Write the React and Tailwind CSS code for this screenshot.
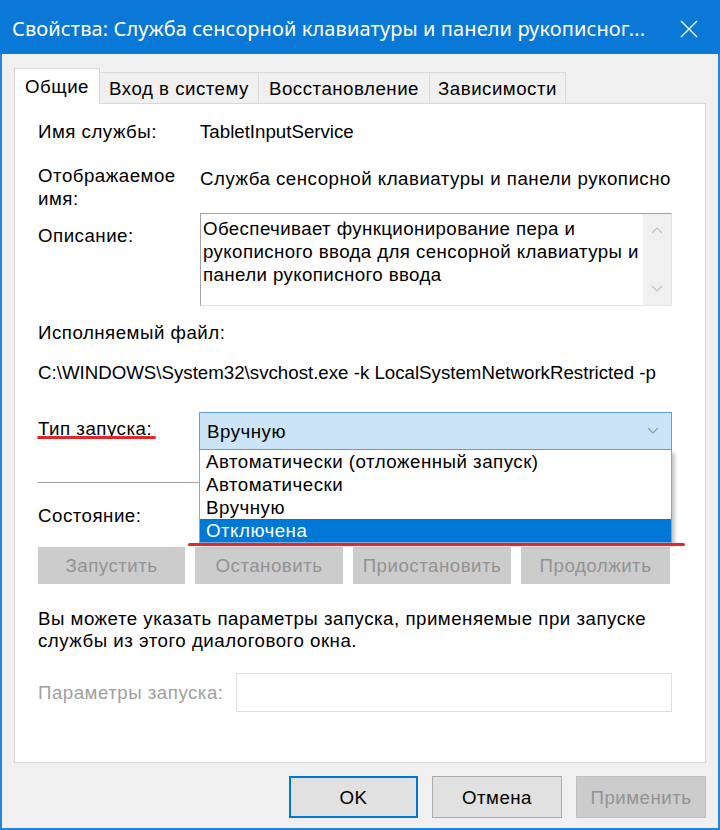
import React from "react";

function Chevron({ up = false, className = "" }) {
  return (
    <svg width="12" height="8" viewBox="0 0 12 8" className={className}>
      <path
        d={up ? "M1 7 L6 2 L11 7" : "M1 1 L6 6 L11 1"}
        fill="none"
        stroke="currentColor"
        strokeWidth="1.2"
      />
    </svg>
  );
}

export default function App() {
  const path = "C:\\WINDOWS\\System32\\svchost.exe -k LocalSystemNetworkRestricted -p";
  return (
    <div className="relative w-[720px] h-[830px] flex flex-col bg-[#f0f0f0] font-['Liberation_Sans',Arial,sans-serif] text-[18.7px] leading-[23px] tracking-[0.5px] text-black overflow-hidden">
      {/* Title bar */}
      <div className="h-[54px] shrink-0 bg-[#0a78d6] flex items-center pl-[12px] pr-[22px] pt-[4px] text-white">
        <div className="flex-1 whitespace-nowrap font-['Noto_Sans',sans-serif] text-[20px] leading-[26px] tracking-[0.1px]">
          Свойства: Служба сенсорной клавиатуры и панели рукописног...
        </div>
        <svg width="18" height="18" viewBox="0 0 18 18">
          <path d="M1 1 L17 17 M17 1 L1 17" stroke="white" strokeWidth="1.3" fill="none" />
        </svg>
      </div>

      {/* Body */}
      <div className="flex-1 flex flex-col border-x-2 border-b-2 border-[#2583d8] px-[12px] pt-[14px]">
        {/* Tabs */}
        <div className="h-[35px] flex items-end">
          <div className="relative z-10 -mb-px h-[36px] w-[86px] bg-white border border-b-0 border-[#d9d9d9] flex items-center justify-center">
            Общие
          </div>
          <div className="h-[31px] w-[159px] border border-l-0 border-b-0 border-[#d9d9d9] bg-[#f0f0f0] flex items-center justify-center">
            Вход в систему
          </div>
          <div className="h-[31px] w-[171px] border border-l-0 border-b-0 border-[#d9d9d9] bg-[#f0f0f0] flex items-center justify-center">
            Восстановление
          </div>
          <div className="h-[31px] w-[136px] border border-l-0 border-b-0 border-[#d9d9d9] bg-[#f0f0f0] flex items-center justify-center">
            Зависимости
          </div>
        </div>

        {/* Panel */}
        <div className="h-[660px] shrink-0 bg-white border border-[#d9d9d9] pl-[23px] pr-[33px] pt-[16px] flex flex-col">
          {/* Name */}
          <div className="flex h-[23px]">
            <div className="w-[162px] shrink-0">Имя службы:</div>
            <div className="tracking-normal">TabletInputService</div>
          </div>
          {/* Display name */}
          <div className="flex mt-[21px] h-[46px]">
            <div className="w-[162px] shrink-0">
              <div>Отображаемое</div>
              <div>имя:</div>
            </div>
            <div className="mt-[3px] w-[472px] overflow-hidden whitespace-nowrap">
              Служба сенсорной клавиатуры и панели рукописного ввода
            </div>
          </div>
          {/* Description */}
          <div className="flex mt-[3px]">
            <div className="w-[162px] shrink-0 mt-[11px]">Описание:</div>
            <div className="w-[472px] h-[93px] flex border-t border-l border-[#a3a3a3] border-r border-b border-r-[#e3e3e3] border-b-[#e3e3e3]">
              <div className="flex-1 min-w-0 pl-[2px] pt-[3px] whitespace-nowrap tracking-[0.4px]">
                <div>Обеспечивает функционирование пера и</div>
                <div>рукописного ввода для сенсорной клавиатуры и</div>
                <div>панели рукописного ввода</div>
              </div>
              <div className="w-[28px] shrink-0 bg-[#f0f0f0] flex flex-col items-center justify-between py-[12px] text-[#c2c2c2]">
                <Chevron up />
                <Chevron />
              </div>
            </div>
          </div>
          {/* Executable */}
          <div className="mt-[15px] h-[23px]">Исполняемый файл:</div>
          <div className="mt-[17px] h-[23px] whitespace-nowrap tracking-normal">{path}</div>

          {/* Startup type */}
          <div className="flex mt-[28px] relative z-20">
            <div className="w-[161px] shrink-0 mt-[5px]">Тип запуска:</div>
            <div className="relative w-[473px]">
              <div className="h-[38px] bg-[#cce4f7] border border-[#5b9fe0] flex items-center pl-[7px] pr-[12px]">
                <div className="flex-1">Вручную</div>
                <Chevron className="text-[#8a9aaa]" />
              </div>
              <div className="absolute top-full left-0 right-0 bg-white border-x border-b border-[#7ea8d8] shadow-[3px_3px_3px_rgba(0,0,0,0.22)]">
                <div className="h-[23px] pl-[6px] whitespace-nowrap">Автоматически (отложенный запуск)</div>
                <div className="h-[23px] pl-[6px]">Автоматически</div>
                <div className="h-[23px] pl-[6px]">Вручную</div>
                <div className="h-[23px] pl-[6px] bg-[#0078d7] text-white">Отключена</div>
              </div>
            </div>
          </div>

          {/* Separator */}
          <div className="mt-[32px] h-px bg-[#a0a0a0]" />

          {/* Status */}
          <div className="mt-[21px] h-[23px]">Состояние:</div>

          {/* Service buttons */}
          <div className="mt-[20px] flex gap-[10px] text-[#939393]">
            <div className="w-[147px] h-[37px] bg-[#cccccc] flex items-center justify-center">Запустить</div>
            <div className="w-[148px] h-[37px] bg-[#cccccc] flex items-center justify-center">Остановить</div>
            <div className="w-[158px] h-[37px] bg-[#cccccc] flex items-center justify-center">Приостановить</div>
            <div className="w-[149px] h-[37px] bg-[#cccccc] flex items-center justify-center">Продолжить</div>
          </div>

          {/* Paragraph */}
          <div className="mt-[24px] leading-[22px]">
            <div>Вы можете указать параметры запуска, применяемые при запуске</div>
            <div>службы из этого диалогового окна.</div>
          </div>

          {/* Params */}
          <div className="mt-[21px] flex">
            <div className="w-[198px] shrink-0 mt-[8px] text-[#a0a0a0] whitespace-nowrap">Параметры запуска:</div>
            <div className="w-[436px] h-[39px] bg-white border border-[#e0e0e0]" />
          </div>
        </div>

        {/* Dialog buttons */}
        <div className="mt-[13px] flex justify-end gap-[14px]">
          <div className="w-[129px] h-[42px] bg-[#e1e1e1] border-2 border-[#0078d7] flex items-center justify-center">OK</div>
          <div className="w-[130px] h-[42px] bg-[#e1e1e1] border border-[#adadad] flex items-center justify-center">Отмена</div>
          <div className="w-[130px] h-[42px] bg-[#cccccc] border border-[#bfbfbf] flex items-center justify-center text-[#939393]">Применить</div>
        </div>
      </div>

      {/* Red annotation underlines */}
      <div className="absolute left-[37px] top-[436px] w-[119px] h-[3px] rounded-full bg-[#e3262b] z-30" />
      <div className="absolute left-[188px] top-[543px] w-[497px] h-[3px] rounded-full bg-[#e3262b] z-30" />
    </div>
  );
}
